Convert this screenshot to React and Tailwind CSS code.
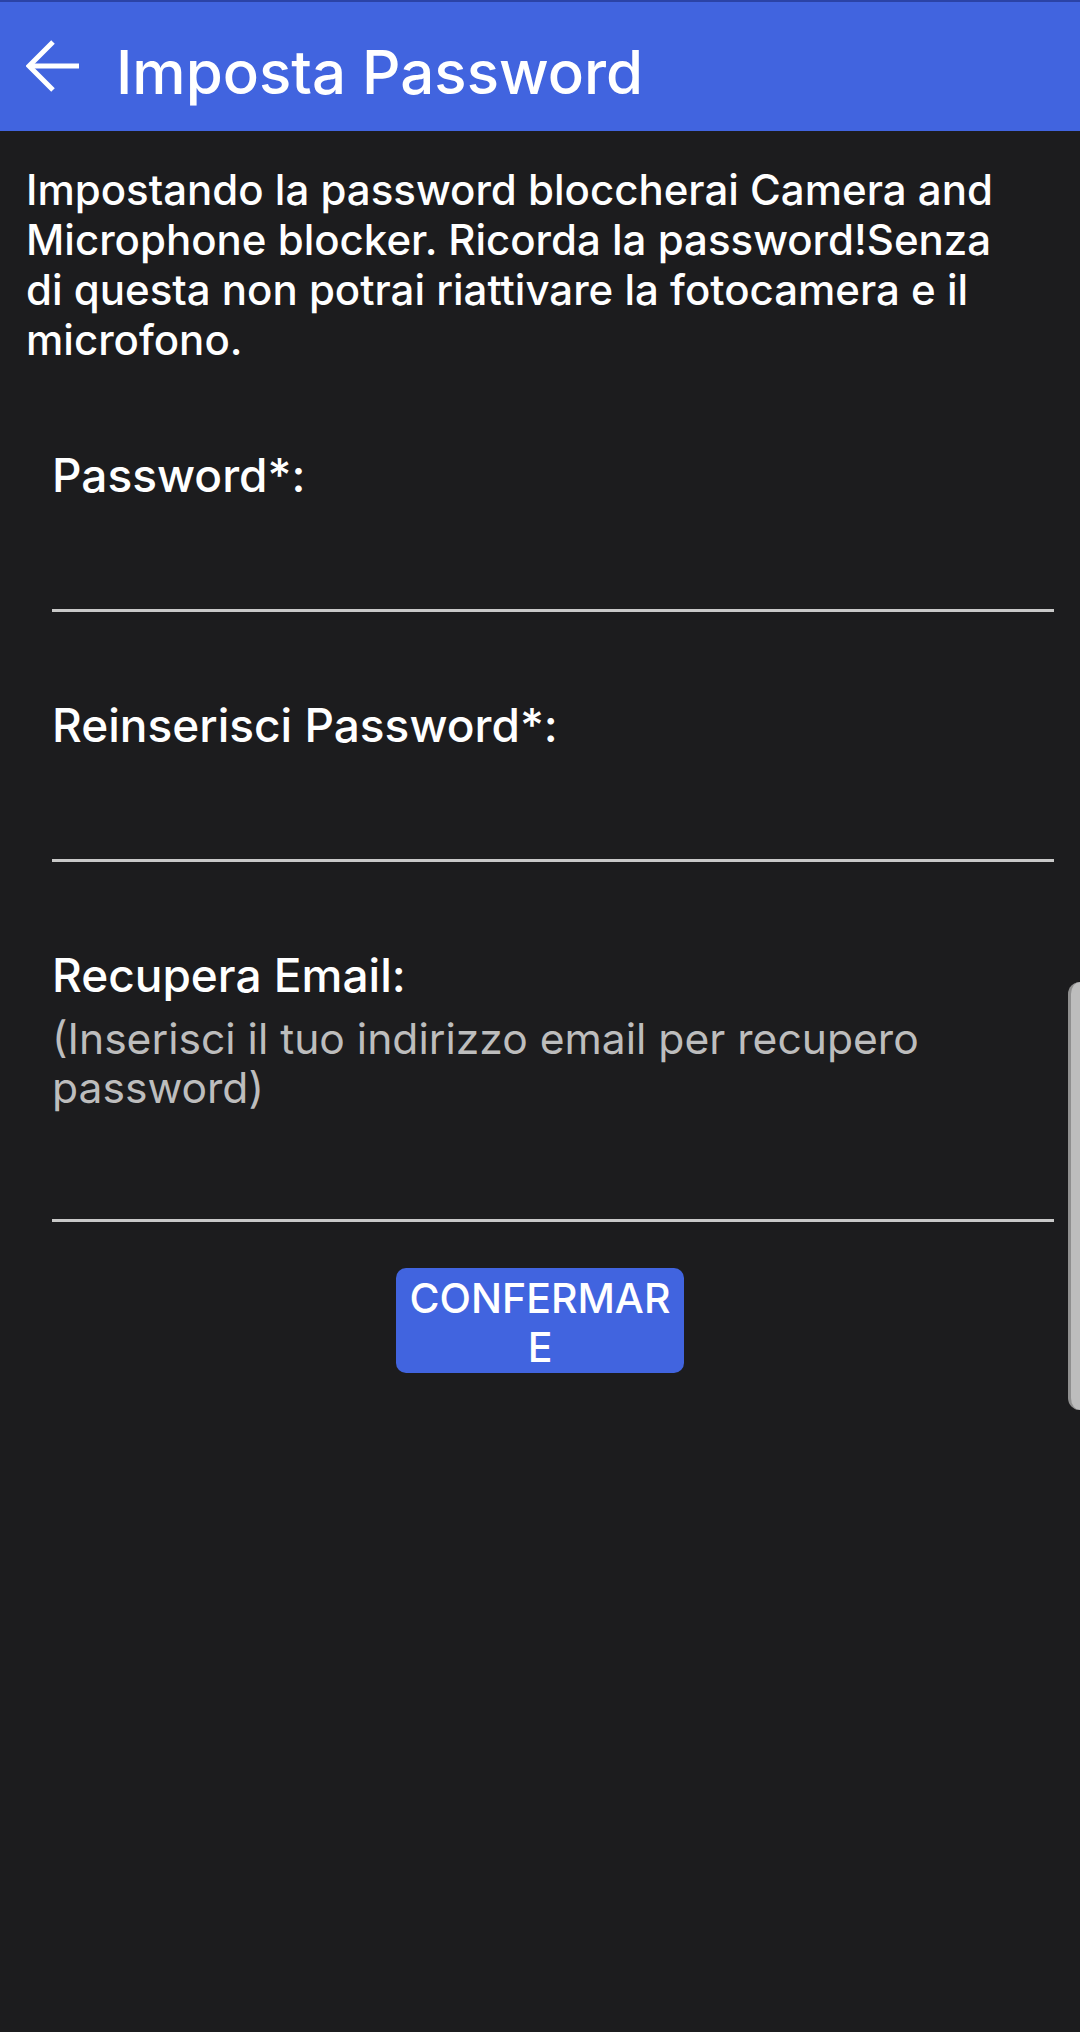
import React, { useState } from "react";

const FONT = { fontFamily: "Inter, 'Noto Sans', sans-serif" };

const BackArrow = () => (
  <svg width="54" height="54" viewBox="0 0 54 54" fill="none" stroke="white" strokeWidth="5" strokeLinecap="butt" strokeLinejoin="miter">
    <path d="M53 26H3" />
    <path d="M27 2L3 26l24 24" />
  </svg>
);

const Field = ({ label, hint, type, value, onChange }) => (
  <div className="flex flex-col">
    <label className="text-[46px] leading-[54px] font-medium text-white">{label}</label>
    {hint && (
      <p className="mt-[12px] text-[42.6px] leading-[49px] text-[#bdbdbd] whitespace-nowrap">{hint}</p>
    )}
    <input
      type={type}
      value={value}
      onChange={(e) => onChange(e.target.value)}
      className="h-[110px] w-full bg-transparent text-white text-[40px] outline-none border-b-[3px] border-[#c8c8c8]"
    />
  </div>
);

export default function App() {
  const [password, setPassword] = useState("");
  const [repeat, setRepeat] = useState("");
  const [email, setEmail] = useState("");

  return (
    <div className="relative min-h-[2032px] w-[1080px] bg-[#1c1c1e] overflow-hidden" style={FONT}>
      {/* toolbar */}
      <header className="flex items-center h-[131px] pl-[26px] bg-[#4164df] border-t-2 border-[#2b43a6]">
        <BackArrow />
        <h1 className="ml-[36px] mt-[10px] text-[60px] leading-none font-medium text-white">
          Imposta Password
        </h1>
      </header>

      <p className="mt-[34px] px-[26px] text-[42px] leading-[50px] font-medium text-white whitespace-nowrap">
        Impostando la password bloccherai Camera and
        <br />
        Microphone blocker. Ricorda la password!Senza
        <br />
        di questa non potrai riattivare la fotocamera e il
        <br />
        microfono.
      </p>

      <form className="mt-[83px] ml-[52px] mr-[26px] flex flex-col gap-[86px]">
        <Field label="Password*:" type="password" value={password} onChange={setPassword} />
        <Field label="Reinserisci Password*:" type="password" value={repeat} onChange={setRepeat} />
        <Field
          label="Recupera Email:"
          hint={
            <>
              (Inserisci il tuo indirizzo email per recupero
              <br />
              password)
            </>
          }
          type="email"
          value={email}
          onChange={setEmail}
        />
      </form>

      <div className="flex justify-center mt-[46px]">
        <button
          type="button"
          className="w-[288px] h-[105px] pt-[4px] rounded-[10px] bg-[#4164df] text-white text-[41px] leading-[49px] font-medium"
        >
          CONFERMAR
          <br />
          E
        </button>
      </div>

      {/* scroll indicator */}
      <div className="absolute right-0 top-[982px] w-[12px] h-[428px] rounded-l-[12px] bg-[#bdbdbd] border-l-[3px] border-[#8f8f8f]" />
    </div>
  );
}
